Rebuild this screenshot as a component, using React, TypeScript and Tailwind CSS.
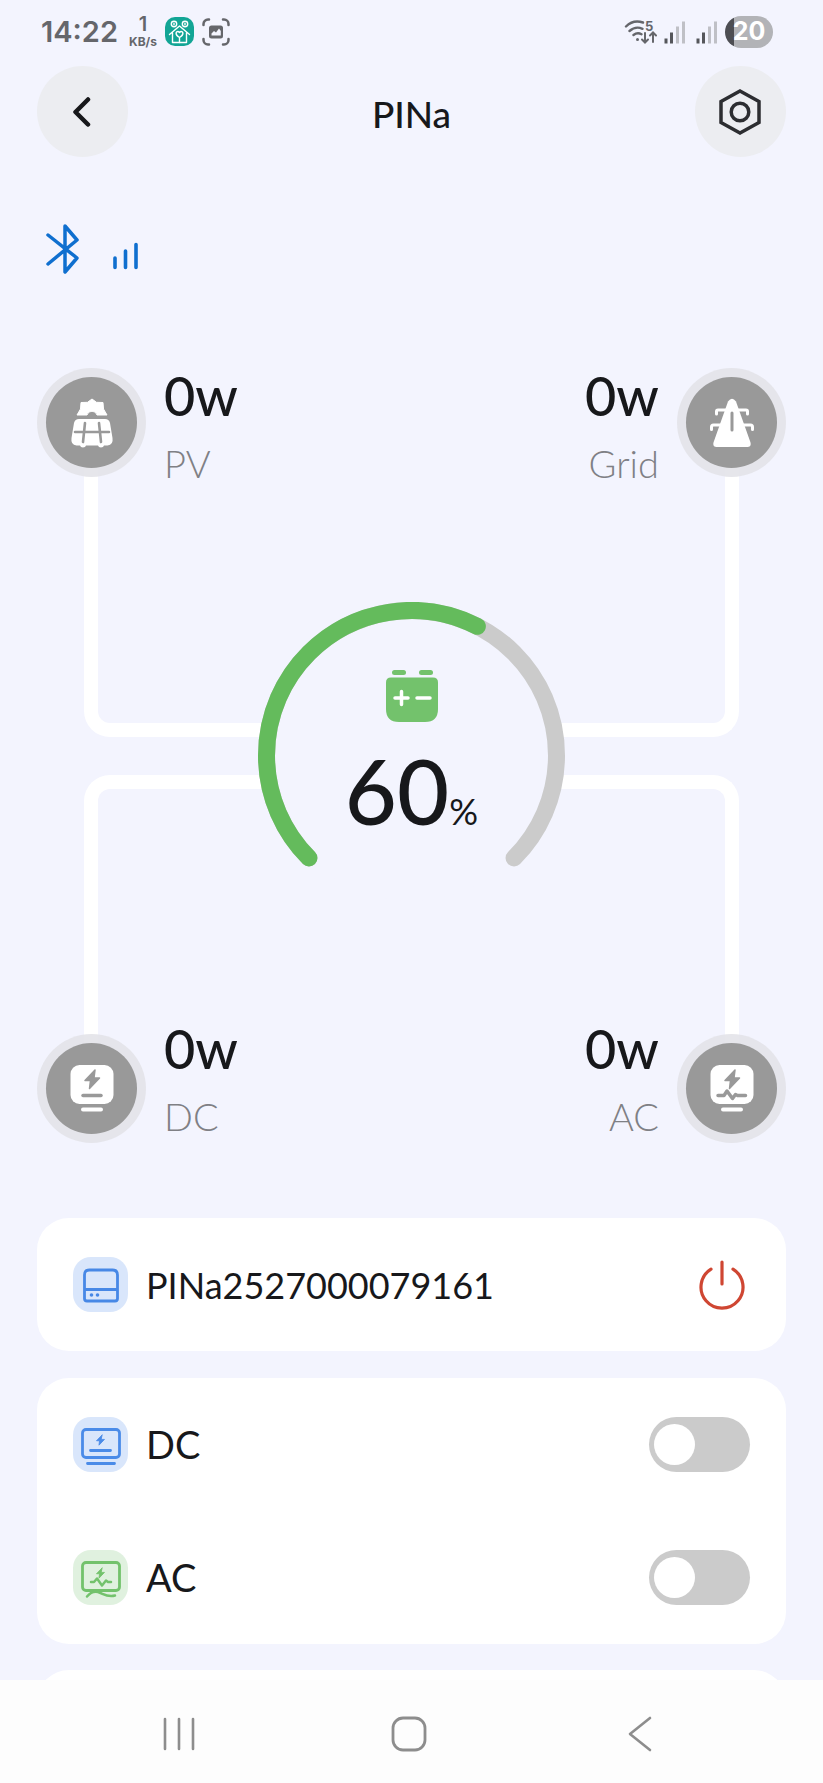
import React, { useState } from 'react';

const SignalBars: React.FC = () => (
  <svg width="22" height="24" viewBox="0 0 22 24" fill="none" strokeWidth="3" aria-hidden="true">
    <path d="M2 18.500v5M7.500 12.500v11" stroke="#55565b" />
    <path d="M13.500 6.500v17M19.500 1.500v22" stroke="#bfc0c6" />
  </svg>
);

const StatusBar: React.FC = () => (
  <div className="flex h-[66px] items-center justify-between pr-[50px] pb-[3px] pl-[41px] font-['Inter',sans-serif] text-[#65666b]">
    <div className="flex items-center">
      <span className="w-[88px] text-[29px] font-semibold leading-8">14:22</span>
      <div className="flex w-[28px] flex-col items-center font-semibold">
        <span className="text-[20px] leading-5">1</span>
        <span className="text-[12px] font-bold leading-4">KB/s</span>
      </div>
      <svg className="ml-2" width="29" height="29" viewBox="0 0 29 29" fill="none" aria-hidden="true">
        <rect width="29" height="29" rx="10" fill="#12a595" />
        <g stroke="#fff" strokeWidth="1.400" strokeLinecap="round" strokeLinejoin="round">
          <circle cx="9" cy="7" r="2.700" />
          <circle cx="20" cy="7" r="2.700" />
          <path d="M9 6.200v1.600M20 6.200v1.600M4.500 17.500L14.500 9l10 8.500M7.500 16v9.500h14V16" />
          <path d="M14.500 20.500c-5-3-3.500-6-1.700-6 1 0 1.700 1 1.700 1s.7-1 1.700-1c1.800 0 3.300 3-1.700 6zv5" />
        </g>
      </svg>
      <svg className="ml-2" width="28" height="28" viewBox="0 0 28 28" fill="none" aria-hidden="true">
        <path
          d="M1.500 7V6a4.500 4.500 0 0 1 4.500-4.500h1M21 1.500h1A4.500 4.500 0 0 1 26.500 6v1M26.500 21v1a4.500 4.500 0 0 1-4.500 4.500h-1M7 26.500H6A4.500 4.500 0 0 1 1.500 22v-1"
          stroke="#65666b"
          strokeWidth="2.500"
          strokeLinecap="round"
        />
        <rect x="7" y="7.500" width="14" height="13" rx="2.500" fill="#65666b" />
        <path d="M9.500 15.500l2.500-2.500 2 1.500 3-4 1.800 2.500v4.500H9.500z" fill="#f3f4fe" />
      </svg>
    </div>

    <div className="flex items-center">
      <svg width="34" height="26" viewBox="0 0 34 26" fill="none" stroke="#65666b" strokeWidth="2.400" strokeLinecap="round" aria-hidden="true">
        <path d="M2 7.500C7 2.500 13 1.500 19 3.500M5.500 12c4-3.500 9-4 13-2.200M9.500 16c2.500-2 5.500-2.200 8-.8" />
        <circle cx="13.500" cy="20.500" r="1.500" fill="#65666b" stroke="none" />
        <path d="M21 14v9M18 20.500l3 3 3-3M29 23v-9M26 16.500l3-3 3 3" strokeWidth="2" />
        <text x="21" y="12" fontSize="13" fontWeight="700" fill="#65666b" stroke="none">5</text>
      </svg>
      <div className="flex gap-2.5 pl-1.5">
        <SignalBars />
        <SignalBars />
      </div>
      <div className="ml-[7px] flex h-8 w-12 items-center justify-center rounded-full bg-[linear-gradient(90deg,#4d4e53_9px,#b2b3b7_9px)] text-[25px] font-bold text-white">
        20
      </div>
    </div>
  </div>
);

const Bolt: React.FC<{ x: number; y: number; scale?: number; color: string }> = ({ x, y, scale = 1, color }) => (
  <path
    transform={`translate(${x} ${y}) scale(${scale})`}
    d="M10 0L0 10.500h5.500L4.500 18.500 14.500 8H9z"
    fill={color}
    stroke={color}
    strokeWidth="1.500"
    strokeLinejoin="round"
  />
);

const PvIcon = () => (
  <svg width="44" height="50" viewBox="0 0 44 50" fill="none" aria-hidden="true">
    <path
      d="M7 17l3.500-6 .5-6.500 6.500-.2L22 1l4.500 3.300 6.500.2.500 6.500 3.500 6H27a5.200 5.200 0 0 0-10 0z"
      fill="#fff"
      stroke="#fff"
      strokeLinejoin="round"
    />
    <path
      d="M9 21h26q4 0 5 4l2.500 15q1 7-5 7.500h-3.500q-.5 2-3 2t-3-2H16q-.500 2-3 2t-3-2H6.500q-6-.5-5-7.500L4 25q1-4 5-4z"
      fill="#fff"
    />
    <path d="M5 34h34M15 25l-2 19M29 25l2 19" stroke="#999" strokeWidth="2.600" strokeLinecap="round" />
  </svg>
);

const GridIcon = () => (
  <svg width="44" height="50" viewBox="0 0 44 50" fill="none" aria-hidden="true">
    <path d="M18 3.500Q22-2 26 3.500l14.500 41q1 4.500-3 4.500h-31q-4 0-3-4.500z" fill="#fff" />
    <path
      d="M6.500 16v-2.500q0-1.500 1.500-1.500h28q1.500 0 1.500 1.500V16M1.500 31.500V29q0-2 2-2H12M32 27h8.500q2 0 2 2v2.500"
      stroke="#fff"
      strokeWidth="3"
      strokeLinecap="round"
    />
    <path d="M22 15v17" stroke="#999" strokeWidth="3" strokeLinecap="round" />
  </svg>
);

const DcIcon = () => (
  <svg width="44" height="50" viewBox="0 0 44 50" fill="none" aria-hidden="true">
    <rect x=".5" y="1" width="43" height="39" rx="9" fill="#fff" />
    <Bolt x={15} y={6} color="#999" />
    <path d="M13 31.500h18" stroke="#999" strokeWidth="3.500" strokeLinecap="round" />
    <path d="M13 45.500h18" stroke="#fff" strokeWidth="4" strokeLinecap="round" />
  </svg>
);

const AcIcon = () => (
  <svg width="44" height="50" viewBox="0 0 44 50" fill="none" aria-hidden="true">
    <rect x=".5" y="1" width="43" height="39" rx="9" fill="#fff" />
    <Bolt x={15} y={6} color="#999" />
    <path
      d="M8 31.500h6l3-4.500 5.500 7.500 3-4 2 1h8"
      stroke="#999"
      strokeWidth="3.500"
      strokeLinecap="round"
      strokeLinejoin="round"
    />
    <path d="M13 45.500h18" stroke="#fff" strokeWidth="4" strokeLinecap="round" />
  </svg>
);

interface NodeProps {
  label: string;
  watts: number;
  icon: React.ReactNode;
  right?: boolean;
  bottom?: boolean;
}

const PowerNode: React.FC<NodeProps> = ({ label, watts, icon, right, bottom }) => (
  <div className={`flex gap-[18px] ${right ? 'flex-row-reverse text-right' : ''} ${bottom ? 'items-end' : 'items-start'}`}>
    <div className="flex size-[109px] items-center justify-center rounded-full bg-[#e3e3e9]/90">
      <div className="flex size-[91px] items-center justify-center rounded-full bg-[#999]">{icon}</div>
    </div>
    <div className={bottom ? 'pb-2' : ''}>
      <p className="text-[54px] font-medium leading-[56px] text-[#17181b]">{watts}w</p>
      <p className="mt-5 text-[38px] font-light leading-[38px] text-[#7f8085]">{label}</p>
    </div>
  </div>
);

const Gauge: React.FC<{ percent: number }> = ({ percent }) => {
  const arc = 'M102.470 256.530A145 145 0 1 1 307.530 256.530';
  return (
    <div className="grid size-[307px] justify-self-center self-center rounded-full">
      <svg className="[grid-area:1/1]" viewBox="51.500 .5 307 307" fill="none" aria-hidden="true">
        <circle cx="205" cy="154" r="145" fill="#f3f4fe" />
        <path d={arc} stroke="#cbcbcb" strokeWidth="17" strokeLinecap="round" />
        <path
          d={arc}
          stroke="#64bb5c"
          strokeWidth="17"
          strokeLinecap="round"
          pathLength="100"
          strokeDasharray={`${percent} 200`}
        />
      </svg>
      <div className="flex flex-col items-center pt-[68px] [grid-area:1/1]">
        <svg width="52" height="52" viewBox="0 0 52 52" fill="none" aria-hidden="true">
          <rect x="6" y="0" width="14" height="5" rx="2.500" fill="#73c26c" />
          <rect x="33" y="0" width="14" height="5" rx="2.500" fill="#73c26c" />
          <path d="M5 7.500h42q5 0 5 5V39q0 13-13 13H13Q0 52 0 39V12.500q0-5 5-5z" fill="#73c26c" />
          <path d="M9 28h13M15.500 21.500v13M31 28h13" stroke="#fff" strokeWidth="3.500" strokeLinecap="round" />
        </svg>
        <p className="mt-4 flex items-baseline leading-[104px] text-[#17181b]">
          <span className="text-[90px] font-medium">{percent}</span>
          <span className="text-[36px]">%</span>
        </p>
      </div>
    </div>
  );
};

const Tile: React.FC<{ tone: 'blue' | 'green'; children: React.ReactNode }> = ({ tone, children }) => (
  <span className={`flex size-[55px] items-center justify-center rounded-[18px] ${tone === 'blue' ? 'bg-[#d9e6fb]' : 'bg-[#e0f1df]'}`}>
    {children}
  </span>
);

const DeviceIcon = () => (
  <svg width="40" height="40" viewBox="0 0 40 40" fill="none" stroke="#4788e6" strokeWidth="2.800" aria-hidden="true">
    <path d="M3.500 33.500V10q0-5 5-5h23q5 0 5 5v23.500q0 2.500-2.500 2.500H6q-2.500 0-2.500-2.500zM3.500 24.500h33" />
    <circle cx="10.500" cy="30" r="1.800" fill="#4788e6" stroke="none" />
    <circle cx="16.500" cy="30" r="1.800" fill="#4788e6" stroke="none" />
  </svg>
);

const OutputIcon: React.FC<{ kind: string }> = ({ kind }) => {
  const color = kind === 'DC' ? '#4a8be8' : '#73c26c';
  return (
    <svg width="40" height="42" viewBox="0 0 40 42" fill="none" stroke={color} strokeWidth="2.800" strokeLinecap="round" strokeLinejoin="round" aria-hidden="true">
      <rect x="1.500" y="5.500" width="37" height="28" rx="3.500" />
      <Bolt x={15.500} y={11} scale={0.55} color={color} />
      {kind === 'DC' ? (
        <path d="M9.500 26.500h20M6.500 39.500h27" />
      ) : (
        <path d="M10 25h3l3-3.500 5 7 4-5 2 1.500h3M6 39.500q5-6 11-4.500c6 2 9 5.500 17 3.500" strokeWidth="2.500" />
      )}
    </svg>
  );
};

const App: React.FC = () => {
  const [outputs, setOutputs] = useState<Record<string, boolean>>({ DC: false, AC: false });

  return (
    <div className="bg-[#f3f4fe] font-['Lato',sans-serif] text-[#17181b]">
      <StatusBar />

      <header className="flex items-center justify-between px-[37px]">
        <button type="button" aria-label="Back" className="flex size-[91px] items-center justify-center rounded-full bg-[#ecedf1]">
          <svg width="22" height="30" viewBox="0 0 22 30" fill="none" stroke="#17181b" strokeWidth="4.500" strokeLinecap="round" strokeLinejoin="round">
            <path d="M16 2.500L3.500 15 16 27.500" />
          </svg>
        </button>
        <h1 className="pt-1 text-[37px] font-medium leading-[44px]">PINa</h1>
        <button type="button" aria-label="Settings" className="flex size-[91px] items-center justify-center rounded-full bg-[#ecedf1]">
          <svg width="44" height="48" viewBox="0 0 44 48" fill="none" stroke="#2c2d31" strokeWidth="3.500">
            <path d="M22 3l19 10.500v21L22 45 3 34.500v-21z" />
            <circle cx="22" cy="24" r="8.800" />
          </svg>
        </button>
      </header>

      {/* Connection state */}
      <div className="mt-[67px] flex h-[50px] items-end gap-8 px-[46px]">
        <svg width="34" height="50" viewBox="0 0 34 50" fill="none" stroke="#0f6fcf" strokeWidth="3.500" strokeLinecap="round" strokeLinejoin="round" aria-hidden="true">
          <path d="M2 11l29 23-12 14V2l12 14L2 40" />
        </svg>
        <svg className="mb-1" width="28" height="28" viewBox="0 0 28 28" fill="none" stroke="#0f6fcf" strokeWidth="3.600" strokeLinecap="round" aria-hidden="true">
          <path d="M3 16v9.500M13.500 9v16.500M24 2.500v23" />
        </svg>
      </div>

      {/* Energy flow */}
      <main className="px-[37px] pt-[94px]">
        <div className="relative flex h-[109px] justify-between">
          <PowerNode label="PV" watts={0} icon={<PvIcon />} />
          <PowerNode label="Grid" watts={0} icon={<GridIcon />} right />
        </div>
        <div className="-my-[9px] grid">
          <div className="mx-[47px] flex flex-col gap-[38px] [grid-area:1/1]">
            <div className="h-[269px] rounded-b-[26px] border-x-[14px] border-b-[14px] border-white" />
            <div className="h-[268px] rounded-t-[26px] border-x-[14px] border-t-[14px] border-white" />
          </div>
          <div className="grid [grid-area:1/1]">
            <Gauge percent={60} />
          </div>
        </div>
        <div className="relative flex h-[109px] items-end justify-between">
          <PowerNode label="DC" watts={0} icon={<DcIcon />} bottom />
          <PowerNode label="AC" watts={0} icon={<AcIcon />} right bottom />
        </div>

        <section className="mt-[75px] flex h-[133px] items-center rounded-[32px] bg-white px-9 text-[36px]">
          <Tile tone="blue"><DeviceIcon /></Tile>
          <span className="ml-[18px] flex-1">PINa2527000079161</span>
          <button type="button" aria-label="Power" className="px-[3px]">
            <svg width="50" height="50" viewBox="0 0 50 50" fill="none" stroke="#cf4632" strokeWidth="3.200" strokeLinecap="round">
              <path d="M25 2v22M14 9.200a21 21 0 1 0 22 0" />
            </svg>
          </button>
        </section>

        <section className="mt-[27px] rounded-[32px] bg-white px-9 text-[38px]">
          {Object.keys(outputs).map((name) => (
            <label key={name} className="flex h-[133px] items-center">
              <Tile tone={name === 'DC' ? 'blue' : 'green'}><OutputIcon kind={name} /></Tile>
              <span className="ml-[18px] flex-1">{name}</span>
              <input
                type="checkbox"
                role="switch"
                checked={outputs[name]}
                onChange={(e) => setOutputs({ ...outputs, [name]: e.target.checked })}
                className="peer sr-only"
              />
              <span className="flex h-[55px] w-[101px] items-center rounded-full bg-[#cbcbcb] px-[5px] peer-checked:justify-end peer-checked:bg-[#64bb5c]">
                <span className="size-[41px] rounded-full bg-white" />
              </span>
            </label>
          ))}
        </section>

        {/* Next card, cut off by the navigation bar */}
        <div className="mt-[26px] h-[10px] overflow-hidden">
          <div className="h-[133px] rounded-[32px] bg-white" />
        </div>
      </main>

      <nav className="grid h-[103px] grid-cols-3 items-center bg-[#fdfdfd] pt-1 pr-[68px] pl-16 text-[#8d8d8d]">
        <button type="button" aria-label="Recent apps" className="justify-self-center">
          <svg width="36" height="36" viewBox="0 0 36 36" fill="none" stroke="currentColor" strokeWidth="2.600" strokeLinecap="round">
            <path d="M4 3v30M18 3v30M32 3v30" />
          </svg>
        </button>
        <button type="button" aria-label="Home" className="justify-self-center">
          <svg width="36" height="36" viewBox="0 0 36 36" fill="none" stroke="currentColor" strokeWidth="2.800">
            <rect x="2" y="2" width="32" height="32" rx="10" />
          </svg>
        </button>
        <button type="button" aria-label="Go back" className="justify-self-center">
          <svg width="36" height="36" viewBox="0 0 36 36" fill="none" stroke="currentColor" strokeWidth="2.600" strokeLinecap="round" strokeLinejoin="round">
            <path d="M28 2L8 18l20 16" />
          </svg>
        </button>
      </nav>
    </div>
  );
};

export default App;
